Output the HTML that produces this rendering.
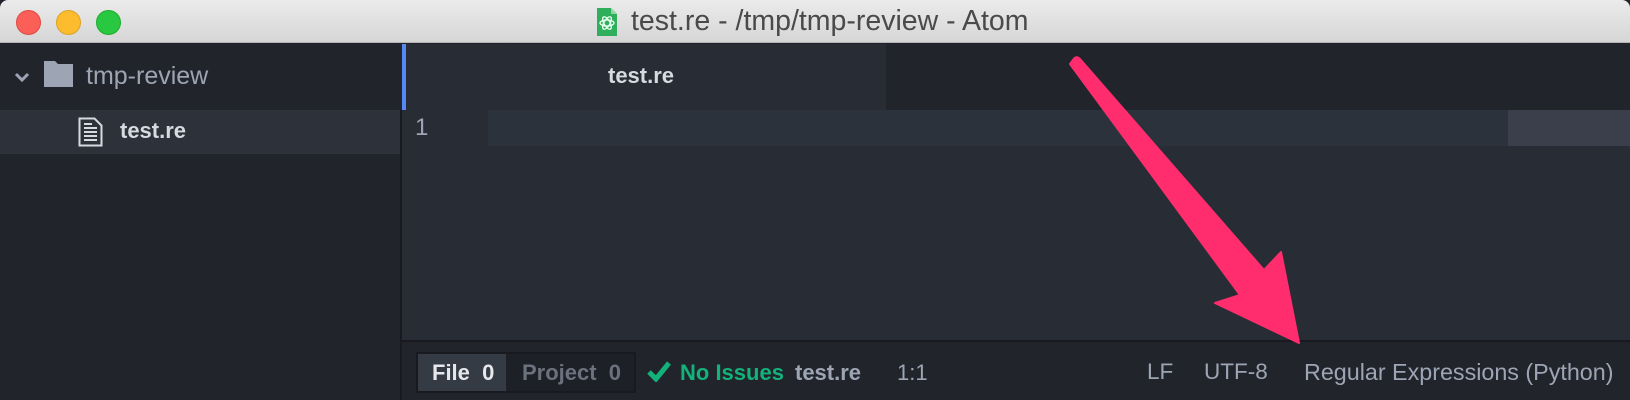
<!DOCTYPE html>
<html><head><style>
*{margin:0;padding:0;box-sizing:border-box}
body{width:1630px;height:400px;overflow:hidden;background:#21252b;font-family:"Liberation Sans",sans-serif;position:relative}
.abs{position:absolute}
.title{left:0;top:0;width:1630px;height:43px;background:linear-gradient(#ebebeb,#d6d6d6);border-bottom:1px solid #b4b4b4;border-radius:8px 8px 0 0}
.dot{width:25px;height:25px;border-radius:50%;top:10px}
.t{white-space:nowrap}
</style></head><body>
<div class="abs title"></div>
<div class="abs dot" style="left:16px;background:#fc5f57;border:1px solid #de4a41"></div>
<div class="abs dot" style="left:56px;background:#fdbc2e;border:1px solid #dea123"></div>
<div class="abs dot" style="left:96px;background:#28c840;border:1px solid #1eab2f"></div>
<svg class="abs" style="left:596px;top:7px" width="22" height="30" viewBox="0 0 22 30"><path d="M1 1h14l6 6v22H1z" fill="#2fae5b"/><path d="M15 1v6h6" fill="#8fd6a5"/><g fill="none" stroke="#e8fff0" stroke-width="1.3"><ellipse cx="11" cy="16" rx="7" ry="3"/><ellipse cx="11" cy="16" rx="7" ry="3" transform="rotate(60 11 16)"/><ellipse cx="11" cy="16" rx="7" ry="3" transform="rotate(-60 11 16)"/></g></svg>
<div class="abs t" style="left:631px;top:5px;font-size:28.5px;color:#4a4a4a">test.re - /tmp/tmp-review - Atom</div>

<!-- sidebar -->
<div class="abs" style="left:0;top:44px;width:400px;height:356px;background:#21252b"></div>
<div class="abs" style="left:0;top:110px;width:400px;height:44px;background:#2c313a"></div>
<svg class="abs" style="left:14px;top:72px" width="16" height="12"><path d="M2 2l6 6 6-6" stroke="#9da5b4" stroke-width="3" fill="none"/></svg>
<svg class="abs" style="left:44px;top:61px" width="29" height="26"><path d="M0 0h11l3 3h15v23H0z" fill="#9da5b4"/></svg>
<div class="abs t" style="left:86px;top:62px;font-size:25px;color:#9da5b4">tmp-review</div>
<svg class="abs" style="left:78px;top:117px" width="25" height="30"><path d="M1.5 1.5h15l7 7v20h-22z" fill="none" stroke="#d7dae0" stroke-width="2"/><path d="M6 11h13M6 15h13M6 19h13M6 23h13M6 7h8" stroke="#d7dae0" stroke-width="2"/></svg>
<div class="abs t" style="left:120px;top:118px;font-size:22px;color:#d7dae0;font-weight:bold">test.re</div>

<!-- tabs & editor -->
<div class="abs" style="left:400px;top:44px;width:1230px;height:66px;background:#21252b"></div>
<div class="abs" style="left:402px;top:44px;width:484px;height:66px;background:#282c34;border-left:4px solid #568af2"></div>
<div class="abs t" style="left:608px;top:63px;font-size:22px;color:#d7dae0;font-weight:bold">test.re</div>
<div class="abs" style="left:400px;top:110px;width:1230px;height:230px;background:#282c34;border-left:2px solid #181a1f"></div>
<div class="abs" style="left:488px;top:110px;width:1020px;height:36px;background:#2c323c"></div>
<div class="abs t" style="left:415px;top:114px;font-size:24px;color:#9da5b4">1</div>
<div class="abs" style="left:1508px;top:110px;width:122px;height:36px;background:#3a3f4b"></div>

<!-- status -->
<div class="abs" style="left:400px;top:340px;width:1230px;height:60px;background:#21252b;border-top:2px solid #181a1f;border-left:2px solid #181a1f"></div>
<div class="abs" style="left:416px;top:352px;width:220px;height:41px;background:#1d2026;border:2px solid #181a1f"></div>
<div class="abs" style="left:418px;top:354px;width:88px;height:37px;background:#353b45"></div>
<div class="abs t" style="left:432px;top:360px;font-size:22px;color:#e6e8ec;font-weight:bold">File&nbsp; 0</div>
<div class="abs t" style="left:522px;top:360px;font-size:22px;color:#6b717d;font-weight:bold">Project&nbsp; 0</div>
<svg class="abs" style="left:647px;top:360px" width="24" height="22"><path d="M2 12l7 7L22 3" stroke="#13b27a" stroke-width="5" fill="none"/></svg>
<div class="abs t" style="left:680px;top:360px;font-size:22px;color:#13b27a;font-weight:bold">No Issues</div>
<div class="abs t" style="left:795px;top:360px;font-size:22px;color:#9da5b4;font-weight:bold">test.re</div>
<div class="abs t" style="left:897px;top:360px;font-size:22px;color:#9da5b4">1:1</div>
<div class="abs t" style="left:1147px;top:359px;font-size:22.5px;color:#9da5b4">LF</div>
<div class="abs t" style="left:1204px;top:359px;font-size:22.5px;color:#9da5b4">UTF-8</div>
<div class="abs t" style="left:1304px;top:359px;font-size:23.3px;color:#9da5b4">Regular Expressions (Python)</div>

<!-- arrow -->
<svg class="abs" style="left:0;top:0" width="1630" height="400"><path d="M1073 60 Q1076 55 1080 59 L1264 270 L1281 252 L1299 343 L1215 303 L1240 295 L1070 64Z" fill="#ff2d6e" stroke="#ff2d6e" stroke-width="2" stroke-linejoin="round"/></svg>
</body></html>
